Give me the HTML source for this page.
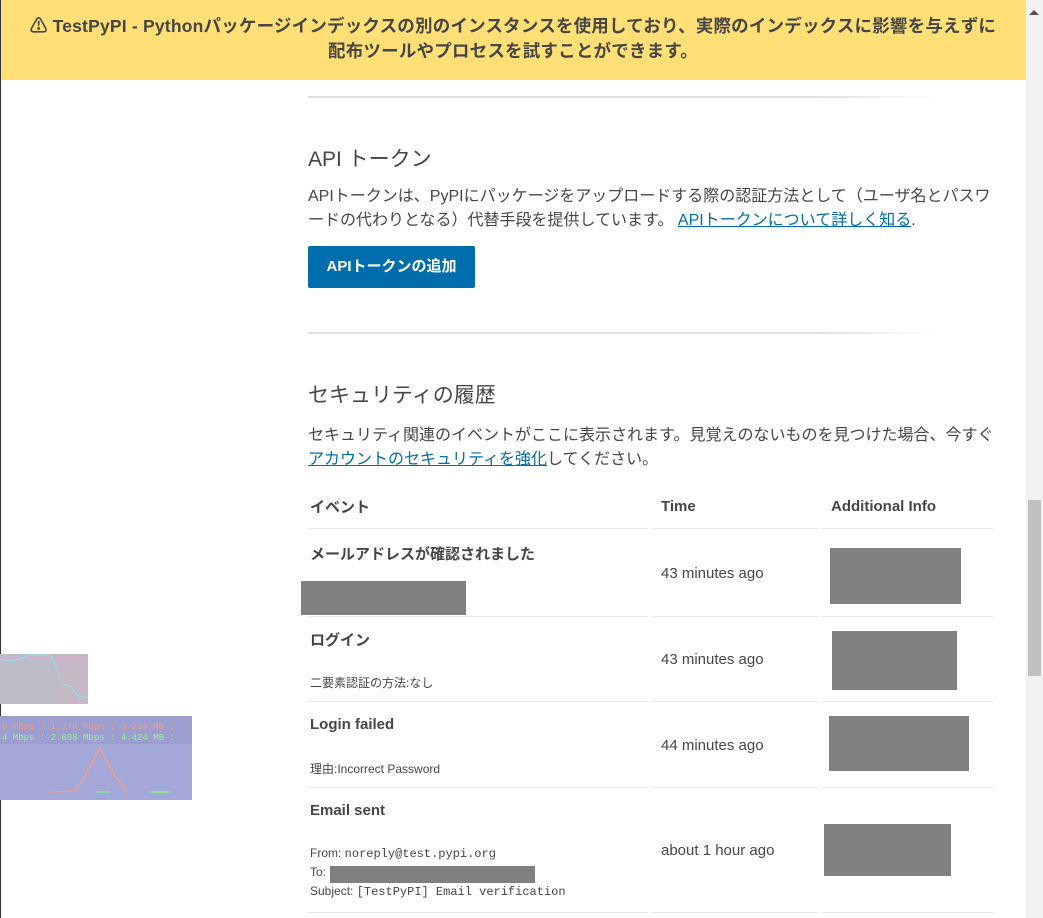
<!DOCTYPE html>
<html><head><meta charset="utf-8"><style>
*{box-sizing:border-box;margin:0;padding:0}
body{width:1043px;height:918px;overflow:hidden;background:#fff;font-family:"Liberation Sans","Noto Sans CJK JP",sans-serif;color:#464646;position:relative}
.banner{position:absolute;left:0;top:0;width:1026px;height:80px;background:#ffdf76;text-align:center;font-weight:bold;font-size:17.5px;line-height:25px;padding-top:14px;color:#464646;letter-spacing:0.2px}
.sb{position:absolute;left:1026px;top:0;width:17px;height:918px;background:#f1f1f1}
.thumb{position:absolute;left:1028px;top:500px;width:13px;height:176px;background:#c1c1c1}
.hr{position:absolute;left:308px;width:630px;height:2px;background:linear-gradient(90deg,#ddd,#ddd 80%,#fff)}
h2{position:absolute;left:308px;font-size:21px;font-weight:normal;color:#464646}
p{position:absolute;left:308px;width:692px;font-size:16px;line-height:24px}
a{color:#006dad;text-decoration:underline}
.btn{position:absolute;left:308px;top:246px;width:167px;height:42px;background:#006dad;color:#fff;font-weight:bold;font-size:15px;line-height:42px;text-align:center;border-radius:2px}
.t{position:absolute;font-size:15px}
.b{font-weight:bold}
.line{position:absolute;height:1px;background:#e8e8e8}
.g{position:absolute;background:#808080}
.mono{font-family:"Liberation Mono",monospace;font-size:12px}
.s{position:absolute;font-size:12px;left:310px}
</style></head><body>
<div class="banner">⚠ TestPyPI - Pythonパッケージインデックスの別のインスタンスを使用しており、実際のインデックスに影響を与えずに<br>配布ツールやプロセスを試すことができます。</div>
<div class="sb"></div><div style="position:absolute;left:1029px;top:10px;width:0;height:0;border-left:5px solid transparent;border-right:5px solid transparent;border-bottom:5px solid #505050"></div><div class="thumb"></div>
<div style="position:absolute;left:0;top:0;width:1px;height:918px;background:#333"></div>
<div class="hr" style="top:96px"></div>
<h2 style="top:143px">API トークン</h2>
<p style="top:185px">APIトークンは、PyPIにパッケージをアップロードする際の認証方法として（ユーザ名とパスワードの代わりとなる）代替手段を提供しています。 <a>APIトークンについて詳しく知る</a>.</p>
<div class="btn">APIトークンの追加</div>
<div class="hr" style="top:332px"></div>
<h2 style="top:379px">セキュリティの履歴</h2>
<p style="top:424px">セキュリティ関連のイベントがここに表示されます。見覚えのないものを見つけた場合、今すぐ<a>アカウントのセキュリティを強化</a>してください。</p>
<div class="t b" style="left:310px;top:496px">イベント</div>
<div class="t b" style="left:661px;top:498px">Time</div>
<div class="t b" style="left:831px;top:498px">Additional Info</div>
<div class="line" style="left:308px;top:528px;width:340px"></div><div class="line" style="left:652px;top:528px;width:166px"></div><div class="line" style="left:822px;top:528px;width:172px"></div>
<div class="t b" style="left:310px;top:543px">メールアドレスが確認されました</div>
<div class="g" style="left:301px;top:581px;width:165px;height:34px"></div>
<div class="t" style="left:661px;top:565px">43 minutes ago</div>
<div class="g" style="left:830px;top:548px;width:131px;height:56px"></div>
<div class="line" style="left:308px;top:616px;width:340px"></div><div class="line" style="left:652px;top:616px;width:166px"></div><div class="line" style="left:822px;top:616px;width:172px"></div>
<div class="t b" style="left:310px;top:629px">ログイン</div>
<div class="s" style="top:674px">二要素認証の方法:なし</div>
<div class="t" style="left:661px;top:651px">43 minutes ago</div>
<div class="g" style="left:832px;top:631px;width:125px;height:59px"></div>
<div class="line" style="left:308px;top:701px;width:340px"></div><div class="line" style="left:652px;top:701px;width:166px"></div><div class="line" style="left:822px;top:701px;width:172px"></div>
<div class="t b" style="left:310px;top:716px">Login failed</div>
<div class="s" style="top:760px">理由:Incorrect Password</div>
<div class="t" style="left:661px;top:737px">44 minutes ago</div>
<div class="g" style="left:829px;top:716px;width:140px;height:55px"></div>
<div class="line" style="left:308px;top:787px;width:340px"></div><div class="line" style="left:652px;top:787px;width:166px"></div><div class="line" style="left:822px;top:787px;width:172px"></div>
<div class="t b" style="left:310px;top:802px">Email sent</div>
<div class="s" style="top:846px">From: <span class="mono">noreply@test.pypi.org</span></div>
<div class="s" style="top:865px">To:</div>
<div class="g" style="left:330px;top:866px;width:205px;height:17px"></div>
<div class="s" style="top:884px">Subject: <span class="mono">[TestPyPI] Email verification</span></div>
<div class="t" style="left:661px;top:842px">about 1 hour ago</div>
<div class="g" style="left:824px;top:824px;width:127px;height:52px"></div>
<div class="line" style="left:308px;top:912px;width:340px"></div><div class="line" style="left:652px;top:912px;width:166px"></div><div class="line" style="left:822px;top:912px;width:172px"></div>
<svg style="position:absolute;left:0;top:654px" width="88" height="50"><rect width="88" height="50" fill="#bcbcc8"/><rect x="55" width="33" height="50" fill="#c4b8c4"/><line x1="0" y1="4" x2="88" y2="4" stroke="#e8a0e0"/><polyline points="0,5 10,7 20,5 30,1 50,1 55,10 62,30 70,32 78,42 88,44" fill="none" stroke="#8ee8e8"/></svg>
<svg style="position:absolute;left:0;top:716px" width="192" height="84"><rect width="192" height="84" fill="#a4a8d8"/><rect y="0" width="192" height="28" fill="#9c9ed0"/><text x="2" y="13" font-family="Liberation Mono" font-size="9" fill="#f0a090">0 Mbps  :   1.376 Mbps  :  3.234 MB :</text><text x="2" y="24" font-family="Liberation Mono" font-size="9" fill="#a0f0a0">4 Mbps  :   2.698 Mbps  :  4.424 MB :</text><polyline points="50,76 75,75 85,60 100,32 115,60 128,77" fill="none" stroke="#f0a090" stroke-width="1.5"/><line x1="97" y1="76" x2="110" y2="76" stroke="#90f090" stroke-width="1.5"/><line x1="150" y1="76" x2="170" y2="76" stroke="#90f090" stroke-width="1.5"/></svg>
</body></html>
